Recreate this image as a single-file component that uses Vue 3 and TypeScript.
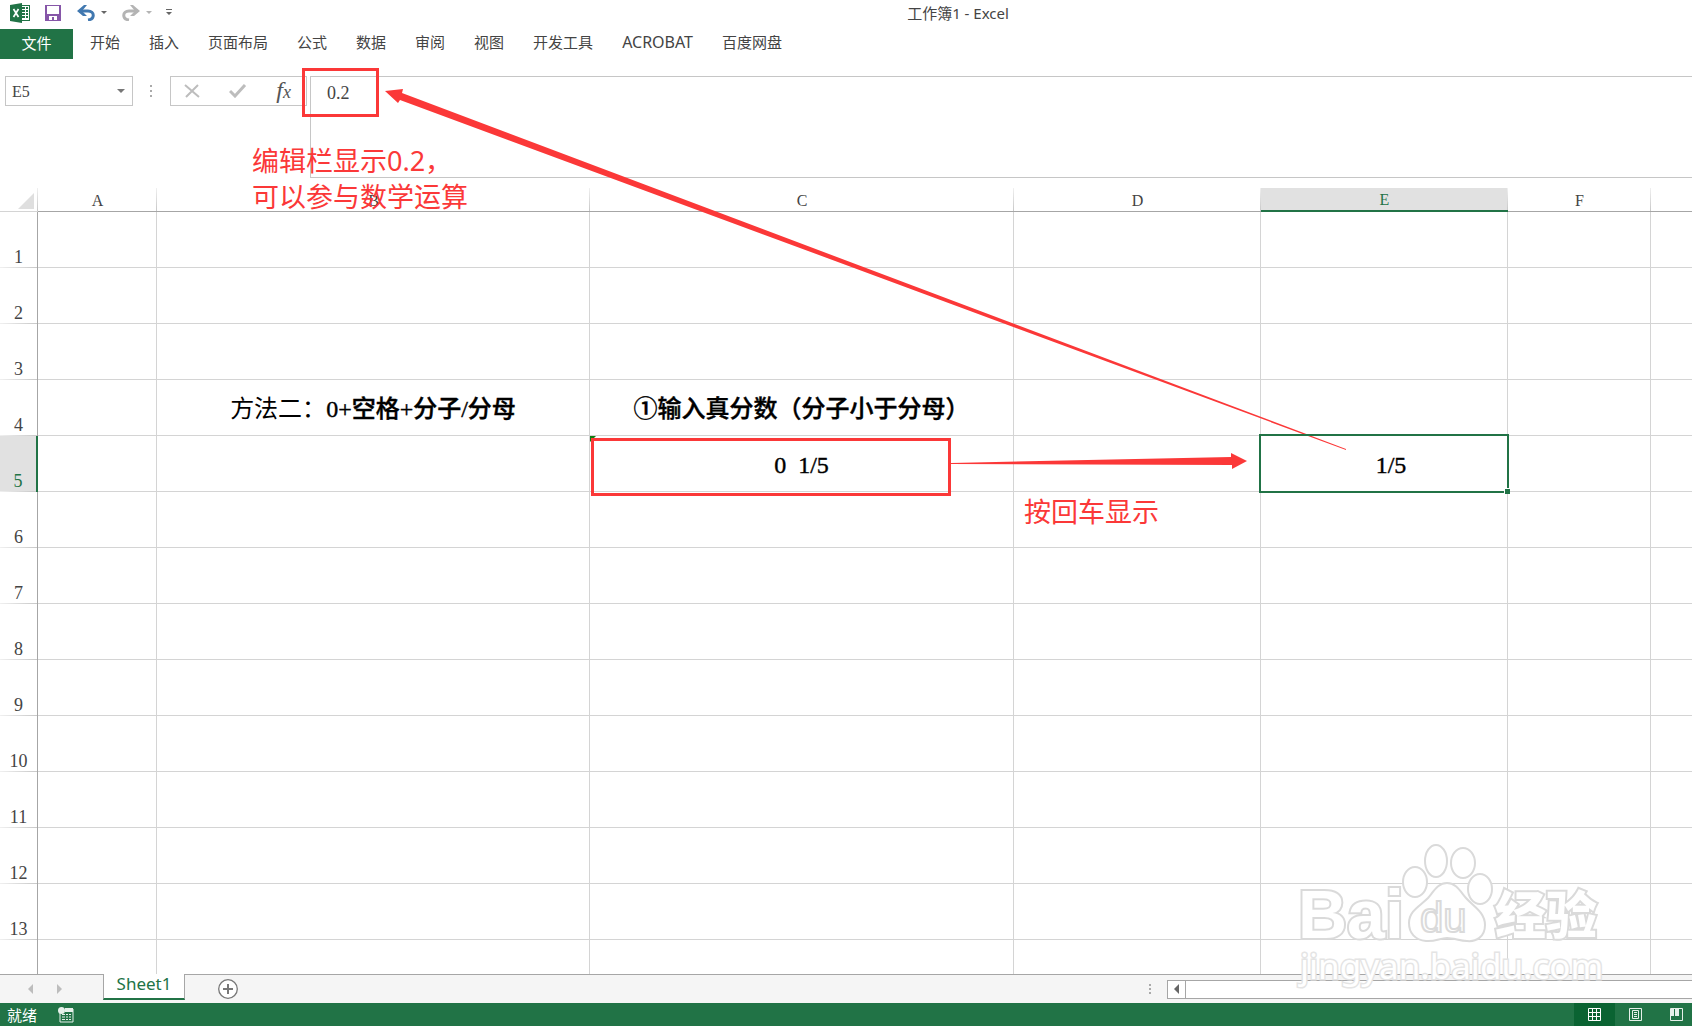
<script setup lang="ts">
import { ref } from 'vue'

interface Column {
  name: string
  cls: string
}

interface Run {
  text: string
  bold: boolean
}

const tabs: string[] = ['开始', '插入', '页面布局', '公式', '数据', '审阅', '视图', '开发工具', 'ACROBAT', '百度网盘']

const columns: Column[] = [
  { name: 'A', cls: 'col-a' },
  { name: 'B', cls: 'col-b' },
  { name: 'C', cls: 'col-c' },
  { name: 'D', cls: 'col-d' },
  { name: 'E', cls: 'col-e' },
  { name: 'F', cls: 'col-f' },
  { name: '', cls: 'col-rest' },
]

const fullRows = 13
const rows: number[] = Array.from({ length: fullRows + 1 }, (_, i) => i + 1)

const cells: Record<string, Run[]> = {
  B4: [
    { text: '方法二：', bold: false },
    { text: '0+空格+分子/分母', bold: true },
  ],
  C4: [{ text: '①输入真分数（分子小于分母）', bold: true }],
  C5: [{ text: '0\u20021/5', bold: true }],
  E5: [{ text: '1/5', bold: true }],
}

const activeColumn = 'E'
const activeRow = 5
const cellName = ref('E5')
const formula = ref('0.2')

const isLatin = (label: string): boolean => /^[A-Z]+$/.test(label)
</script>

<template>
  <div class="app">
    <header class="titlebar">
      <div class="quick">
        <svg class="logo" width="20" height="20" viewBox="0 0 20 20" aria-hidden="true">
          <rect x="10.500" y="2.500" width="9" height="15" fill="#fff" stroke="#217346" />
          <path d="M12 5h3M16 5h2M12 8h3M16 8h2M12 11h3M16 11h2M12 14h3M16 14h2" stroke="#217346" stroke-width="2" />
          <path d="M0 2l12-2v20L0 18z" fill="#217346" />
          <path d="M3.500 6l5 8M8.500 6l-5 8" stroke="#fff" stroke-width="1.700" />
        </svg>
        <button type="button" class="icon save" aria-label="保存">
          <svg width="16" height="16" viewBox="0 0 16 16">
            <path d="M0 0h16v16H0z" fill="#8656a8" />
            <path d="M2 1h12v8H2zM4 11h8v4h-3v-3H7v3H4z" fill="#fff" />
          </svg>
        </button>
        <button type="button" class="icon undo" aria-label="撤消">
          <svg width="18" height="16" viewBox="0 0 18 16">
            <path d="M2 6h9c7 0 7 8 0 9" fill="none" stroke="#4178b0" stroke-width="3" />
            <path d="M0 6l7-6h3L5 6l5 5H6z" fill="#4178b0" />
          </svg>
        </button>
        <button type="button" class="icon caret" aria-label="撤消列表">
          <svg width="6" height="4" viewBox="0 0 6 4"><path d="M0 0h6L3 3z" fill="#666" /></svg>
        </button>
        <button type="button" class="icon redo" aria-label="恢复">
          <svg width="18" height="16" viewBox="0 0 18 16">
            <path d="M16 6H7c-7 0-7 8 0 9" fill="none" stroke="#b4b4b4" stroke-width="3" />
            <path d="M18 6l-7-6H8l5 6-5 5h4z" fill="#b4b4b4" />
          </svg>
        </button>
        <button type="button" class="icon caret" aria-label="恢复列表">
          <svg width="6" height="4" viewBox="0 0 6 4"><path d="M0 0h6L3 3z" fill="#b4b4b4" /></svg>
        </button>
        <button type="button" class="icon more" aria-label="自定义快速访问工具栏">
          <svg width="6" height="7" viewBox="0 0 6 7"><path d="M0 0h6v1H0zM0 3h6L3 6z" fill="#666" /></svg>
        </button>
      </div>
      <h1 class="title">工作簿1 - Excel</h1>
    </header>

    <nav class="ribbon">
      <button type="button" class="file">文件</button>
      <div class="tabs">
        <button v-for="tab in tabs" :key="tab" type="button" :class="{ latin: isLatin(tab) }">{{ tab }}</button>
      </div>
    </nav>

    <section class="formula-row">
      <div class="name-box">
        <input v-model="cellName" type="text" aria-label="名称框" />
        <button type="button" class="icon" aria-label="名称列表">
          <svg width="8" height="5" viewBox="0 0 8 5"><path d="M0 0h8L4 4z" fill="#777" /></svg>
        </button>
      </div>
      <svg class="grip" width="2" height="12" viewBox="0 0 2 12" aria-hidden="true">
        <path d="M0 0h2v2H0zM0 5h2v2H0zM0 10h2v2H0z" fill="#aaa" />
      </svg>
      <div class="fx-box">
        <button type="button" class="icon" aria-label="取消">
          <svg width="16" height="14" viewBox="0 0 16 14"><path d="M1 1l14 12M14 1L2 13" stroke="#bdbdbd" stroke-width="2" /></svg>
        </button>
        <button type="button" class="icon" aria-label="输入">
          <svg width="18" height="14" viewBox="0 0 18 14"><path d="M1 7l5 5L16 1" fill="none" stroke="#bdbdbd" stroke-width="3" /></svg>
        </button>
        <button type="button" class="icon fx" aria-label="插入函数">f<span>x</span></button>
      </div>
      <textarea v-model="formula" class="formula" aria-label="编辑栏"></textarea>
    </section>

    <main class="sheet">
      <table class="grid">
        <colgroup>
          <col class="col-head" />
          <col v-for="c in columns" :key="c.cls" :class="c.cls" />
        </colgroup>
        <thead>
          <tr>
            <th class="corner" aria-label="全选">
              <svg width="16" height="16" viewBox="0 0 16 16"><path d="M16 0v16H0z" fill="#dfdfdf" /></svg>
            </th>
            <th v-for="c in columns" :key="c.cls" scope="col" :class="{ active: c.name === activeColumn }">{{ c.name }}</th>
          </tr>
        </thead>
        <tbody>
          <tr v-for="r in rows" :key="r">
            <th scope="row" :class="{ active: r === activeRow }">{{ r > fullRows ? '' : r }}</th>
            <td
              v-for="c in columns"
              :key="c.cls"
              :class="{ selected: c.name === activeColumn && r === activeRow, flagged: c.name + r === 'C5' }"
            >
              <span v-for="run in cells[c.name + r] ?? []" :key="run.text" :class="{ bold: run.bold }">{{ run.text }}</span>
            </td>
          </tr>
        </tbody>
      </table>
    </main>

    <footer class="sheet-bar">
      <div class="sheet-nav">
        <button type="button" class="icon" aria-label="上一个工作表">
          <svg width="6" height="10" viewBox="0 0 6 10"><path d="M5 0v10L0 5z" fill="#bdbdbd" /></svg>
        </button>
        <button type="button" class="icon" aria-label="下一个工作表">
          <svg width="6" height="10" viewBox="0 0 6 10"><path d="M0 0v10l5-5z" fill="#bdbdbd" /></svg>
        </button>
      </div>
      <button type="button" class="sheet-tab">Sheet1</button>
      <button type="button" class="icon add" aria-label="新工作表">
        <svg width="20" height="20" viewBox="0 0 20 20">
          <circle cx="10" cy="10" r="9.300" fill="#fff" stroke="#777" stroke-width="1.300" />
          <path d="M5 10h10M10 5v10" stroke="#777" stroke-width="2" />
        </svg>
      </button>
      <div class="scroll">
        <svg width="2" height="11" viewBox="0 0 2 11" aria-hidden="true">
          <path d="M0 0h2v2H0zM0 4h2v2H0zM0 8h2v2H0z" fill="#aaa" />
        </svg>
        <div class="track">
          <button type="button" class="icon" aria-label="向左滚动">
            <svg width="6" height="10" viewBox="0 0 6 10"><path d="M5 0v10L0 5z" fill="#666" /></svg>
          </button>
        </div>
      </div>
    </footer>

    <div class="status">
      <span>就绪</span>
      <svg class="macro" width="16" height="16" viewBox="0 0 16 16" aria-hidden="true">
        <path d="M2 6v9h13V2H7" fill="none" stroke="#e6f0ea" />
        <path d="M7 1h8v4H7z" fill="#e6f0ea" />
        <circle cx="3.500" cy="3.500" r="3.500" fill="#e6f0ea" />
        <path d="M4 7.500h3M8 7.500h2M11 7.500h2M4 10h3M8 10h2M11 10h2M4 12.500h3M8 12.500h2M11 12.500h2" stroke="#e6f0ea" />
      </svg>
      <div class="views">
        <button type="button" class="icon on" aria-label="普通">
          <svg width="13" height="13" viewBox="0 0 13 13">
            <path d="M.5.500h12v12H.500zM4.500 0v13M8.500 0v13M0 4.500h13M0 8.500h13" fill="none" stroke="#fff" />
          </svg>
        </button>
        <button type="button" class="icon" aria-label="页面布局视图">
          <svg width="13" height="13" viewBox="0 0 13 13">
            <path d="M.5.500h12v12H.500zM3.500 2.500h6v8h-6zM5 4.500h3M5 6.500h3M5 8.500h3" fill="none" stroke="#e6f0ea" />
          </svg>
        </button>
        <button type="button" class="icon" aria-label="分页预览">
          <svg width="13" height="13" viewBox="0 0 13 13">
            <path d="M.5.500h12v12H.500z" fill="none" stroke="#e6f0ea" />
            <path d="M1 1h3v7H1zM5 1h4v7H5z" fill="#e6f0ea" />
          </svg>
        </button>
      </div>
    </div>

    <svg class="arrows" aria-hidden="true">
      <path d="M385 91L403 89L402 93L1346 449V450L400 100L398 103Z" fill="#fb3838" />
      <path d="M951 463L1231 457V453L1247 461L1232 469V465L951 464Z" fill="#fb3838" />
    </svg>
    <div class="frame frame-formula"></div>
    <div class="frame frame-cell"></div>
    <p class="note note-formula">编辑栏显示0.2，<br />可以参与数学运算</p>
    <p class="note note-enter">按回车显示</p>

    <svg class="watermark" width="320" height="156" viewBox="1290 834 320 156">
      <g fill="#fff" stroke="#dadada" stroke-width="2">
        <ellipse cx="1415" cy="882" rx="12" ry="15" />
        <ellipse cx="1436" cy="861" rx="11" ry="16" />
        <ellipse cx="1463" cy="863" rx="12" ry="15" />
        <ellipse cx="1480" cy="889" rx="12" ry="15" />
        <path d="M1447 883c9 0 13 8 19 15c7 8 19 14 19 27c0 12-9 17-18 16c-7 0-13-3-20-3s-12 4-21 3c-11-1-17-8-17-18c0-12 11-17 19-25c6-7 10-15 19-15z" />
        <g paint-order="stroke" stroke-width="4">
          <text class="wm-bold" x="1298" y="938" font-size="68">Bai</text>
          <text class="wm-cjk" x="1495" y="934" font-size="51">经验</text>
          <text class="wm-url" x="1300" y="979" font-size="35">jingyan.baidu.com</text>
        </g>
        <text class="wm-du" x="1420" y="932" font-size="42">du</text>
      </g>
    </svg>
  </div>
</template>

<style>
body {
  margin: 0;
}
</style>

<style scoped>
.app {
  position: relative;
  display: flex;
  flex-direction: column;
  height: 100vh;
  overflow: hidden;
  background: #fff;
  color: #444;
  font: 15px/20px "Noto Sans", "Noto Sans CJK SC", sans-serif;
}

button {
  margin: 0;
  padding: 0;
  border: 0;
  background: none;
  color: inherit;
  font: inherit;
}

.icon {
  display: flex;
  align-items: center;
  justify-content: center;
}

svg {
  display: block;
  flex: none;
}

.titlebar {
  display: flex;
  height: 29px;
}

.quick {
  display: flex;
  align-items: center;
  box-sizing: border-box;
  width: 224px;
  padding: 0 0 4px 10px;
}

.save {
  margin-left: 15px;
}

.undo {
  margin-left: 16px;
}

.caret {
  margin-left: 6px;
}

.redo {
  margin-left: 15px;
}

.more {
  margin-left: 14px;
}

.title {
  flex: 1;
  margin: 0;
  padding-top: 3px;
  text-align: center;
  font-size: 15px;
  font-weight: 400;
}

.ribbon {
  display: flex;
  height: 30px;
}

.file {
  width: 73px;
  padding-bottom: 2px;
  background: #217346;
  color: #fff;
}

.tabs {
  display: flex;
  align-items: center;
  gap: 29px;
  padding: 0 0 4px 17px;
}

.latin {
  font-size: 16px;
}

.formula-row {
  display: flex;
  align-items: flex-start;
  padding: 17px 0 10px 5px;
}

.name-box,
.fx-box {
  display: flex;
  align-items: center;
  box-sizing: border-box;
  height: 30px;
  border: 1px solid #c6c6c6;
}

.name-box {
  width: 128px;
  padding-right: 7px;
}

.name-box input {
  flex: 1;
  min-width: 0;
  padding: 2px 0 0 6px;
  border: 0;
  outline: 0;
  background: none;
  color: #444;
  font: 16px/20px "Liberation Serif", serif;
}

.grip {
  margin: 9px 18px 0 17px;
}

.fx-box {
  justify-content: space-between;
  width: 137px;
  padding: 0 15px 0 13px;
}

.fx {
  align-items: baseline;
  color: #555;
  font: italic 24px/24px "Liberation Serif", serif;
}

.fx span {
  font-size: 18px;
}

.formula {
  flex: 1;
  box-sizing: border-box;
  height: 102px;
  margin-left: 3px;
  padding: 6px 16px;
  border: 1px solid #c6c6c6;
  border-right: 0;
  outline: 0;
  resize: none;
  background: none;
  color: #444;
  font: 18px/20px "Liberation Serif", serif;
}

.sheet {
  flex: 1;
  min-height: 0;
  overflow: hidden;
}

.grid {
  width: 100%;
  table-layout: fixed;
  border-collapse: separate;
  border-spacing: 0;
  font-family: "Liberation Serif", "Noto Sans CJK SC", serif;
}

.col-head {
  width: 38px;
}

.col-a {
  width: 119px;
}

.col-b {
  width: 433px;
}

.col-c {
  width: 424px;
}

.col-d,
.col-e {
  width: 247px;
}

.col-f {
  width: 143px;
}

th,
td {
  box-sizing: border-box;
  padding: 0;
  text-align: center;
  font-weight: 400;
}

thead th {
  height: 24px;
  padding-top: 3px;
  border-bottom: 1px solid #a6a6a6;
  background: linear-gradient(#f0f0f0, #c8c8c8) right / 1px 100% no-repeat;
  font-size: 16px;
  line-height: 20px;
}

thead th:last-child {
  background: none;
}

thead .corner {
  padding-top: 0;
  border-bottom-color: #d4d4d4;
}

.corner svg {
  margin: 3px 0 0 18px;
}

thead th.active {
  padding-top: 2px;
  border-bottom: 2px solid #217346;
  background-color: #e1e1e1;
  color: #217346;
}

tbody th {
  height: 56px;
  padding-bottom: 1px;
  border-right: 1px solid #a6a6a6;
  background: linear-gradient(90deg, #f0f0f0, #c8c8c8) bottom / 100% 1px no-repeat;
  font-size: 18px;
  line-height: 20px;
  vertical-align: bottom;
}

tbody th.active {
  border-right: 2px solid #217346;
  background-color: #e1e1e1;
  color: #217346;
}

td {
  position: relative;
  height: 56px;
  padding-top: 2px;
  border-right: 1px solid #d4d4d4;
  border-bottom: 1px solid #d4d4d4;
  color: #000;
  font-size: 24px;
  line-height: 28px;
  white-space: nowrap;
}

td:last-child {
  border-right: 0;
}

.bold {
  font-weight: 500;
  -webkit-text-stroke: 0.4px #000;
}

.flagged::before {
  content: "";
  position: absolute;
  top: 0;
  left: 0;
  border-top: 6px solid #107c10;
  border-right: 6px solid transparent;
}

.selected {
  z-index: 1;
  padding-left: 14px;
}

.selected::before {
  content: "";
  position: absolute;
  inset: -2px;
  border: 2px solid #217346;
}

.selected::after {
  content: "";
  position: absolute;
  right: -3px;
  bottom: -3px;
  width: 5px;
  height: 5px;
  border: solid #fff;
  border-width: 1px 0 0 1px;
  background: #217346;
}

.sheet-bar {
  display: flex;
  flex: none;
  height: 28px;
  border-top: 1px solid #a6a6a6;
  background: #f5f5f5;
}

.sheet-nav {
  display: flex;
  gap: 23px;
  box-sizing: border-box;
  width: 103px;
  padding-left: 28px;
}

.sheet-tab {
  box-sizing: border-box;
  width: 82px;
  height: 26px;
  margin-top: -1px;
  padding-bottom: 4px;
  border: 1px solid #a6a6a6;
  border-top: 0;
  border-bottom: 2px solid #217346;
  background: #fff;
  color: #217346;
  font-size: 17px;
}

.add {
  margin-left: 33px;
}

.scroll {
  display: flex;
  align-items: center;
  gap: 16px;
  width: 543px;
  margin-left: auto;
}

.track {
  display: flex;
  flex: 1;
  height: 17px;
  border: 1px solid #a6a6a6;
  border-right: 0;
  background: #fff;
}

.track button {
  width: 18px;
  border-right: 1px solid #a6a6a6;
}

.status {
  display: flex;
  flex: none;
  align-items: center;
  height: 23px;
  padding-left: 7px;
  background: #217346;
  color: #fff;
}

.macro {
  margin-left: 21px;
}

.views {
  display: flex;
  height: 23px;
  margin-left: auto;
}

.views button {
  width: 41px;
}

.views button:last-child {
  width: 36px;
  padding-left: 4px;
}

.views .on {
  background: #0a6332;
}

.arrows {
  position: absolute;
  inset: 0;
  width: 100%;
  height: 100%;
  pointer-events: none;
}

.frame {
  position: absolute;
  box-sizing: border-box;
  border: 3px solid #fb3838;
  pointer-events: none;
}

.frame-formula {
  top: 68px;
  left: 302px;
  width: 77px;
  height: 49px;
}

.frame-cell {
  top: 438px;
  left: 591px;
  width: 360px;
  height: 58px;
}

.note {
  position: absolute;
  margin: 0;
  color: #fb3838;
  font-size: 27px;
  line-height: 36px;
  white-space: nowrap;
}

.note-formula {
  top: 143px;
  left: 252px;
}

.note-enter {
  top: 494px;
  left: 1024px;
}

.watermark {
  position: absolute;
  right: 82px;
  bottom: 36px;
  pointer-events: none;
}

.wm-bold {
  font-family: "Liberation Sans", sans-serif;
  font-weight: 700;
}

.wm-cjk {
  font-family: "Noto Sans CJK SC", sans-serif;
  font-weight: 900;
}

.wm-url {
  font-family: "Noto Sans", sans-serif;
  stroke: #e4e4e4;
  stroke-width: 3px;
}

.wm-du {
  font-family: "Liberation Sans", sans-serif;
}
</style>
